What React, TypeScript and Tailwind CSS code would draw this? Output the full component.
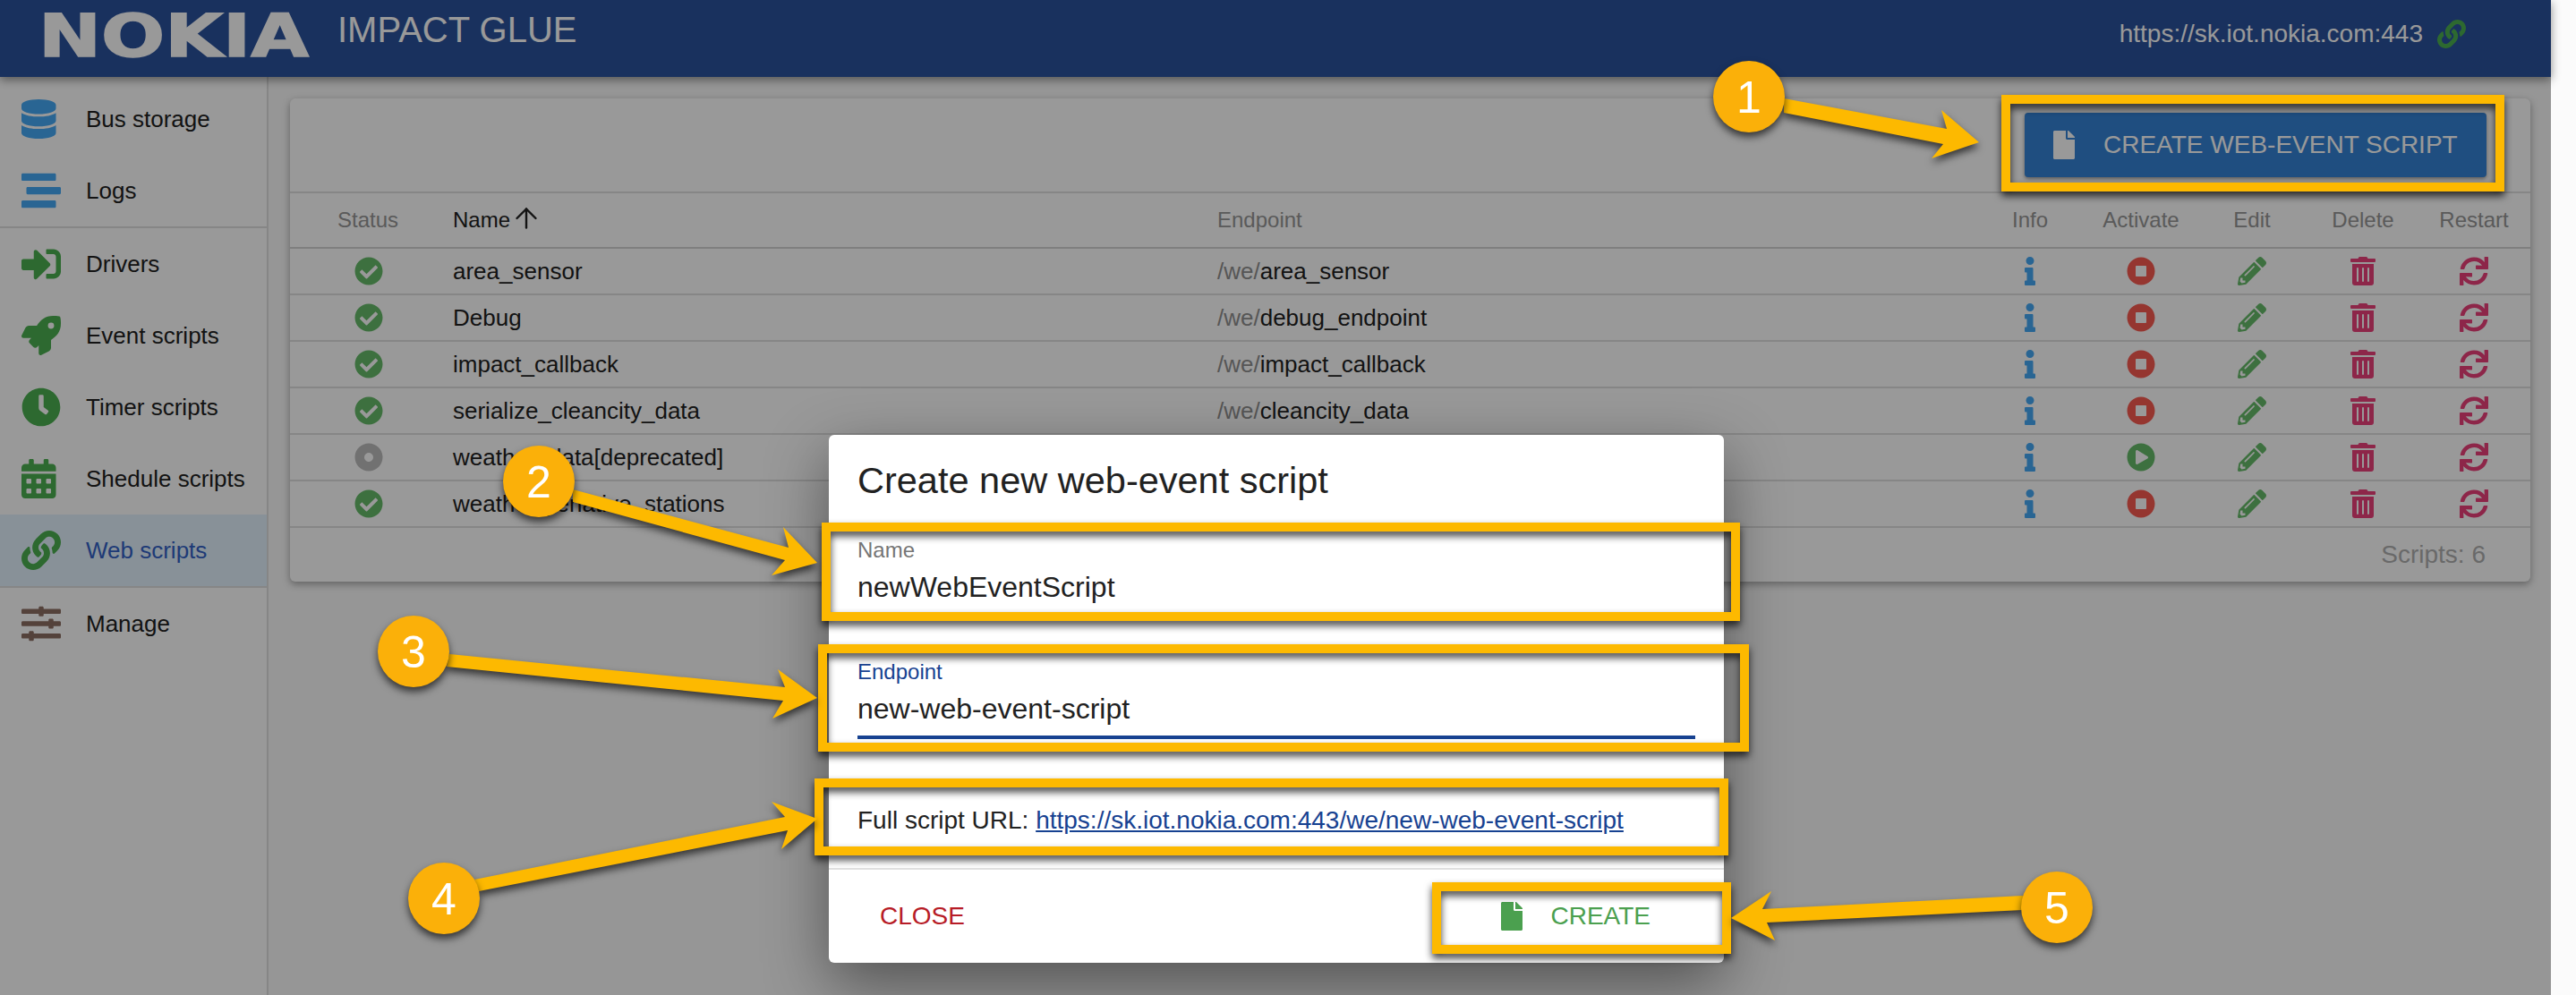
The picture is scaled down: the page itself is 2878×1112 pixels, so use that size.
import { ArrowUp } from 'lucide-react';
import {
  FaCalendarAlt,
  FaCheckCircle,
  FaClock,
  FaDatabase,
  FaDotCircle,
  FaFile,
  FaInfo,
  FaLink,
  FaPencilAlt,
  FaPlayCircle,
  FaRocket,
  FaSignInAlt,
  FaSlidersH,
  FaStopCircle,
  FaStream,
  FaSync,
  FaTrashAlt,
} from 'react-icons/fa';

const scripts = [
  { name: 'area_sensor', endpoint: 'area_sensor', active: true },
  { name: 'Debug', endpoint: 'debug_endpoint', active: true },
  { name: 'impact_callback', endpoint: 'impact_callback', active: true },
  { name: 'serialize_cleancity_data', endpoint: 'cleancity_data', active: true },
  { name: 'weather_data[deprecated]', endpoint: 'weather_data', active: false },
  { name: 'weather_renative_stations', endpoint: 'native_stations', active: true },
];

const menuTop = [
  { label: 'Bus storage', icon: FaDatabase, color: 'text-[#45a8f5]' },
  { label: 'Logs', icon: FaStream, color: 'text-[#45a8f5]' },
];

const menuScripts = [
  { label: 'Drivers', icon: FaSignInAlt, color: 'text-[#4caf50]' },
  { label: 'Event scripts', icon: FaRocket, color: 'text-[#4caf50]' },
  { label: 'Timer scripts', icon: FaClock, color: 'text-[#4caf50]' },
  { label: 'Shedule scripts', icon: FaCalendarAlt, color: 'text-[#4caf50]' },
];

const gridCols = 'grid grid-cols-[182px_854px_846px_repeat(5,124px)]';

// callouts drawn on top of the screenshot
const boxes = [
  { x: 2236, y: 106, w: 562, h: 108 },
  { x: 918, y: 584, w: 1026, h: 110 },
  { x: 914, y: 720, w: 1040, h: 120 },
  { x: 910, y: 870, w: 1021, h: 86 },
  { x: 1600, y: 986, w: 334, h: 80 },
];

const arrows = [
  '1993,110 2175,144 2169,123 2211,159 2158,177 2171,161 1993,126',
  '640,547 881,612 875,589 913,629 862,643 877,626 640,561',
  '502,731 877,768 869,748 913,780 863,803 875,783 499,745',
  '530,983 877,913 862,896 913,915 873,949 880,928 535,996',
  '2260,1001 1969,1016 1979,996 1934,1026 1983,1051 1974,1031 2260,1017',
];

const badges = [
  { n: '1', x: 1954, y: 108 },
  { n: '2', x: 602, y: 538 },
  { n: '3', x: 462, y: 728 },
  { n: '4', x: 496, y: 1004 },
  { n: '5', x: 2298, y: 1014 },
];

function MenuItem({ label, icon: Icon, color, active }: { label: string; icon: typeof FaLink; color: string; active?: boolean }) {
  return (
    <div className={`flex h-[80px] items-center pl-[24px] ${active ? 'bg-[#e3f2fd]' : ''}`}>
      <span className="flex w-[72px]">
        <Icon size={44} preserveAspectRatio="xMinYMid meet" className={color} />
      </span>
      <span className={`text-[26px] ${active ? 'text-[#3262c6]' : 'text-[#212121]'}`}>{label}</span>
    </div>
  );
}

function Sidebar() {
  return (
    <aside className="w-[300px] shrink-0 border-r-2 border-[#e0e0e0] bg-white pt-[7px]">
      {menuTop.map((m) => (
        <MenuItem key={m.label} {...m} />
      ))}
      <div className="h-[2px] bg-[#e0e0e0]" />
      {menuScripts.map((m) => (
        <MenuItem key={m.label} {...m} />
      ))}
      <MenuItem label="Web scripts" icon={FaLink} color="text-[#4caf50]" active />
      <div className="h-[2px] bg-[#e0e0e0]" />
      <MenuItem label="Manage" icon={FaSlidersH} color="text-[#8d6e63]" />
    </aside>
  );
}

function ScriptsTable() {
  return (
    <section className="rounded-[6px] bg-white shadow-[0_3px_8px_rgba(0,0,0,0.35)]">
      <div className="flex h-[106px] items-center justify-end border-b-2 border-[#e0e0e0] pr-[49px]">
        <button className="flex h-[72px] w-[516px] items-center gap-[32px] rounded-[4px] bg-[#3582d5] pl-[32px] text-[28px] text-white shadow-[0_2px_4px_rgba(0,0,0,0.4)]">
          <FaFile className="h-[32px] w-[24px]" />
          CREATE WEB-EVENT SCRIPT
        </button>
      </div>

      <div className={`${gridCols} h-[62px] items-center border-b-2 border-[#d4d4d4] text-center text-[24px] text-[#969696]`}>
        <span className="pr-[8px]">Status</span>
        <span className="flex items-center text-left text-[#212121]">
          Name
          <ArrowUp size={36} strokeWidth={1.6} className="-mt-[4px]" />
        </span>
        <span className="text-left">Endpoint</span>
        <span>Info</span>
        <span>Activate</span>
        <span>Edit</span>
        <span>Delete</span>
        <span>Restart</span>
      </div>

      {scripts.map((s) => (
        <div key={s.name} className={`${gridCols} h-[52px] items-center border-b-2 border-[#e0e0e0] text-[26px] text-[#212121]`}>
          <span className="flex justify-center pr-[6px]">
            {s.active ? <FaCheckCircle size={32} className="text-[#66bb6a]" /> : <FaDotCircle size={32} className="text-[#bdbdbd]" />}
          </span>
          <span>{s.name}</span>
          <span>
            <span className="text-[#8f8f8f]">/we/</span>
            {s.endpoint}
          </span>
          <span className="flex justify-center">
            <FaInfo size={32} className="text-[#45a8f5]" />
          </span>
          <span className="flex justify-center">
            {s.active ? <FaStopCircle size={32} className="text-[#f95a50]" /> : <FaPlayCircle size={32} className="text-[#66bb6a]" />}
          </span>
          <span className="flex justify-center">
            <FaPencilAlt size={32} className="text-[#66bb6a]" />
          </span>
          <span className="flex justify-center">
            <FaTrashAlt size={32} className="text-[#ec407a]" />
          </span>
          <span className="flex justify-center">
            <FaSync size={32} className="text-[#ec407a]" />
          </span>
        </div>
      ))}

      <div className="flex h-[60px] items-center justify-end pr-[50px] text-[28px] text-[#b0b0b0]">Scripts: 6</div>
    </section>
  );
}

function CreateDialog() {
  return (
    <div className="absolute left-[926px] top-[486px] flex h-[590px] w-[1000px] flex-col rounded-[6px] bg-white text-[#212121] shadow-[0_24px_70px_rgba(0,0,0,0.45)]">
      <div className="px-[32px] pt-[27px]">
        <h2 className="text-[41.5px] leading-[48px]">Create new web-event script</h2>
        <div className="mt-[42px] text-[24px] leading-[24px] text-[#757575]">Name</div>
        <div className="mt-[9px] text-[32px] leading-[40px]">newWebEventScript</div>
        <div className="mt-[63px] text-[24px] leading-[24px] text-[#174291]">Endpoint</div>
        <div className="mt-[9px] text-[32px] leading-[40px]">new-web-event-script</div>
        <div className="mt-[10px] h-[4px] bg-[#174291]" />
        <div className="mt-[75px] text-[28px] leading-[32px]">
          Full script URL: <a className="text-[#174291] underline">https://sk.iot.nokia.com:443/we/new-web-event-script</a>
        </div>
      </div>
      <div className="mt-[37px] h-[2px] bg-[#e0e0e0]" />
      <div className="flex flex-1 items-center justify-between pl-[57px] pr-[82px] text-[28px]">
        <span className="text-[#b71c27]">CLOSE</span>
        <span className="flex items-center gap-[32px] text-[#4ba04f]">
          <FaFile className="h-[32px] w-[24px]" />
          CREATE
        </span>
      </div>
    </div>
  );
}

function Callouts() {
  return (
    <svg className="pointer-events-none absolute left-0 top-0" width="2878" height="1112" viewBox="0 0 2878 1112">
      <g className="drop-shadow-[0_5px_4px_rgba(0,0,0,0.75)]">
        {boxes.map((b) => (
          <rect key={b.x} x={b.x + 5} y={b.y + 5} width={b.w - 10} height={b.h - 10} fill="none" stroke="#fdb900" strokeWidth="10" />
        ))}
      </g>
      <g className="drop-shadow-[0_5px_4px_rgba(0,0,0,0.65)]">
        {arrows.map((points) => (
          <polygon key={points} points={points} fill="#fdb900" />
        ))}
      </g>
      {badges.map((b) => (
        <g key={b.n} className="drop-shadow-[0_5px_4px_rgba(0,0,0,0.65)]">
          <circle cx={b.x} cy={b.y} r="40" fill="#fbb009" />
          <text x={b.x} y={b.y + 18} textAnchor="middle" fontSize="50" fill="#fff" fontFamily="Liberation Sans, Arial, sans-serif">
            {b.n}
          </text>
        </g>
      ))}
    </svg>
  );
}

export default function App() {
  return (
    <div className="relative flex h-[1112px] w-[2878px] overflow-hidden bg-[#fbfbfb] font-['Liberation_Sans',Arial,sans-serif]">
      <div className="relative flex w-[2850px] shrink-0 flex-col bg-[#fafafa]">
        <header className="relative z-10 flex h-[86px] shrink-0 items-start bg-[#2b529d] pl-[48px] pr-[95px] text-white shadow-[0_3px_10px_rgba(0,0,0,0.45)]">
          <svg className="mt-[15px] shrink-0 overflow-visible" width="295" height="60" viewBox="0 0 295 60">
            <text x="-5" y="48" fontSize="66" fontWeight="700" fontFamily="DejaVu Sans, sans-serif" fill="#fff" stroke="#fff" strokeWidth="1.5" textLength="302" lengthAdjust="spacingAndGlyphs">
              NOKIA
            </text>
          </svg>
          <div className="ml-[34px] mt-[9px] text-[40px] leading-[48px]">IMPACT GLUE</div>
          <div className="ml-auto mt-[22px] flex items-center gap-[16px] text-[28px] leading-[32px]">
            https://sk.iot.nokia.com:443
            <FaLink size={32} className="text-[#4caf50]" />
          </div>
        </header>
        <div className="flex flex-1">
          <Sidebar />
          <main className="flex-1 pl-[24px] pr-[23px] pt-[24px]">
            <ScriptsTable />
          </main>
        </div>
        <div className="absolute inset-0 z-20 bg-black/40" />
        <div className="absolute inset-0 z-30">
          <CreateDialog />
        </div>
      </div>
      <div className="absolute inset-0 z-40">
        <Callouts />
      </div>
    </div>
  );
}
